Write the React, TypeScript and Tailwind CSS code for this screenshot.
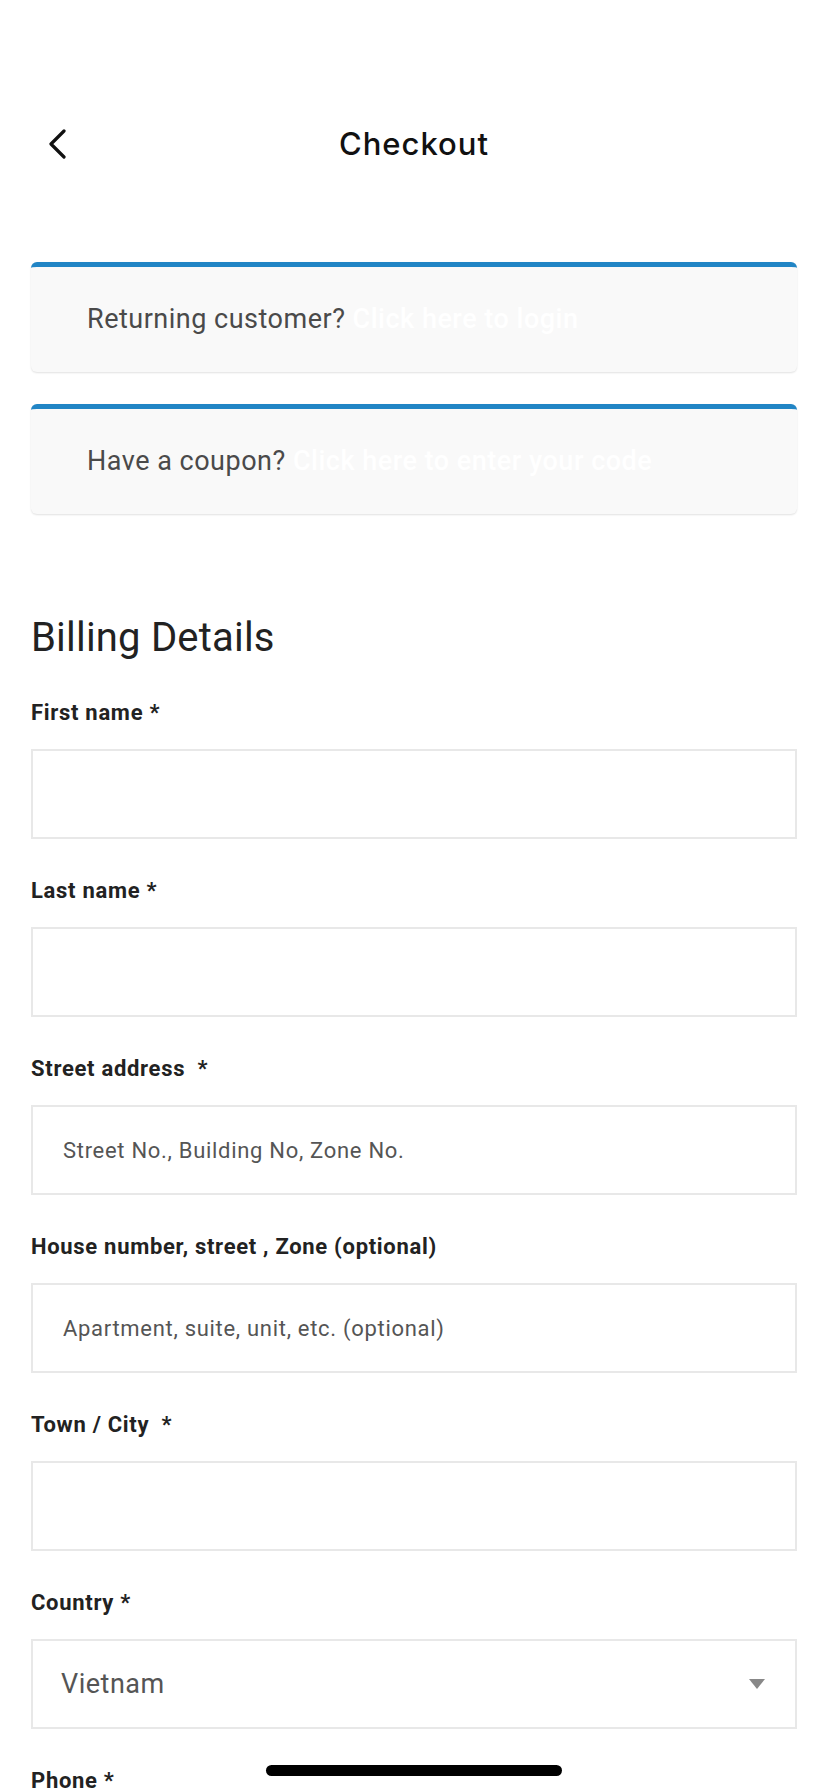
import { ReactNode } from 'react';

const fields = [
  { label: 'First name *', placeholder: '' },
  { label: 'Last name *', placeholder: '' },
  { label: 'Street address\u00a0\u00a0*', placeholder: 'Street No., Building No, Zone No.' },
  { label: 'House number, street , Zone (optional)', placeholder: 'Apartment, suite, unit, etc. (optional)' },
  { label: 'Town / City\u00a0\u00a0*', placeholder: '' },
];

function Notice({ children, link }: { children: ReactNode; link: string }) {
  return (
    <div className="flex h-[110px] items-center rounded-md border-t-[5px] border-[#2185c5] bg-[#f9f9f9] pl-[56px] shadow-[0_1px_2px_rgba(0,0,0,0.12)]">
      <p className="text-[27px] tracking-[0.5px] text-[#4a4a4a]">
        {children} <a className="font-medium text-white">{link}</a>
      </p>
    </div>
  );
}

function Label({ children }: { children: ReactNode }) {
  return (
    <label className="mb-[22px] block text-[22px] leading-[28px] font-bold tracking-[0.7px] text-[#222]">
      {children}
    </label>
  );
}

export default function App() {
  return (
    <div className="relative h-[1792px] w-[828px] overflow-hidden bg-white font-['Roboto',sans-serif]">
      {/* header */}
      <div className="mt-[116px] grid h-[56px] grid-cols-[1fr_auto_1fr] items-center px-[31px]">
        <button className="flex h-[40px] w-[40px] items-center justify-start pl-[17px]">
          <svg width="18" height="32" viewBox="0 0 18 32" fill="none">
            <path d="M16 3 L3 16 L16 29" stroke="#111" strokeWidth="3.2" strokeLinecap="round" strokeLinejoin="round" />
          </svg>
        </button>
        <h1 className="font-['Inter',sans-serif] text-[31px] font-medium tracking-[1px] text-[#111]">Checkout</h1>
        <div />
      </div>

      <div className="mt-[90px] px-[31px]">
        <Notice link="Click here to login">Returning customer?</Notice>
        <div className="mt-[32px]">
          <Notice link="Click here to enter your code">Have a coupon?</Notice>
        </div>

        <h2 className="mt-[100px] mb-[37px] text-[40px] leading-[48px] tracking-[0.2px] text-[#222]">Billing Details</h2>

        {fields.map((f) => (
          <div key={f.label} className="mb-[38px]">
            <Label>{f.label}</Label>
            <input
              placeholder={f.placeholder}
              className="block h-[90px] w-full border-2 border-[#e8e8e8] px-[30px] text-[22px] tracking-[0.7px] text-[#555] outline-none placeholder:text-[#555]"
            />
          </div>
        ))}

        <div className="mb-[38px]">
          <Label>Country *</Label>
          <div className="flex h-[90px] items-center justify-between border-2 border-[#e8e8e8] pr-[30px] pl-[28px]">
            <span className="text-[27px] tracking-[0.5px] text-[#555]">Vietnam</span>
            <svg width="16" height="10" viewBox="0 0 16 10">
              <path d="M0 0 H16 L8 10 Z" fill="#888" />
            </svg>
          </div>
        </div>

        <div>
          <Label>Phone *</Label>
          <input className="block h-[90px] w-full border-2 border-[#e8e8e8]" />
        </div>
      </div>

      {/* home indicator */}
      <div className="absolute bottom-[16px] left-[266px] h-[11px] w-[296px] rounded-full bg-black" />
    </div>
  );
}
